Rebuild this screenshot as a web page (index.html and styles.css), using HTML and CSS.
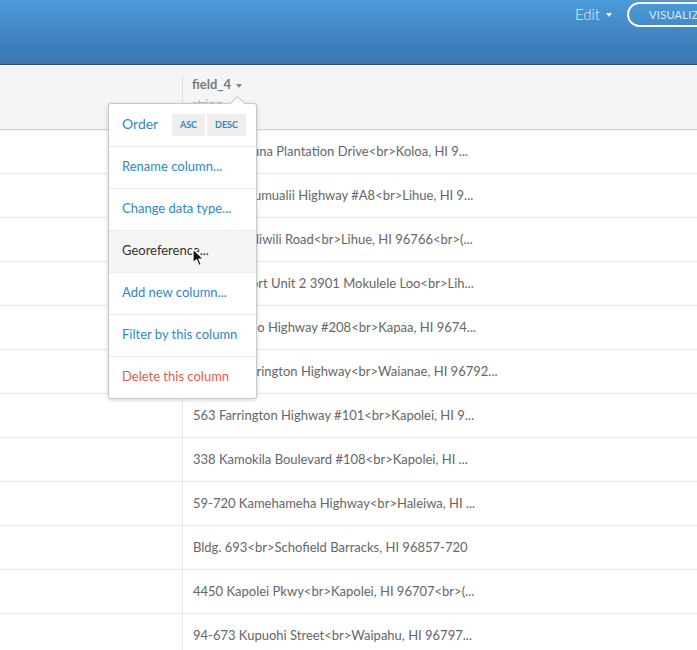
FILE: index.html
```html
<!DOCTYPE html>
<html>
<head>
<meta charset="utf-8">
<link rel="stylesheet" href="styles.css">
</head>
<body>
<div class="page">
  <header class="topbar">
    <nav class="topnav">
      <span class="edit">Edit <span class="caret caret-white"></span></span>
      <span class="viz-btn">VISUALIZE</span>
    </nav>
  </header>
  <div class="thead">
    <div class="col-first"></div>
    <div class="col-head">
      <div class="col-name">field_4 <span class="caret caret-gray"></span></div>
      <div class="col-type">string</div>
    </div>
  </div>
  <div class="tbody">
    <div class="row"><div class="cell-first"></div><div class="cell">2360 Kiahuna Plantation Drive&lt;br&gt;Koloa, HI 9...</div></div>
    <div class="row"><div class="cell-first"></div><div class="cell">3-3295 Kaumualii Highway #A8&lt;br&gt;Lihue, HI 9...</div></div>
    <div class="row"><div class="cell-first"></div><div class="cell">3351 Nawiliwili Road&lt;br&gt;Lihue, HI 96766&lt;br&gt;(...</div></div>
    <div class="row"><div class="cell-first"></div><div class="cell">Lihue Airport Unit 2 3901 Mokulele Loo&lt;br&gt;Lih...</div></div>
    <div class="row"><div class="cell-first"></div><div class="cell">4-831 Kuhio Highway #208&lt;br&gt;Kapaa, HI 9674...</div></div>
    <div class="row"><div class="cell-first"></div><div class="cell">86-120 Farrington Highway&lt;br&gt;Waianae, HI 96792...</div></div>
    <div class="row"><div class="cell-first"></div><div class="cell">563 Farrington Highway #101&lt;br&gt;Kapolei, HI 9...</div></div>
    <div class="row"><div class="cell-first"></div><div class="cell">338 Kamokila Boulevard #108&lt;br&gt;Kapolei, HI ...</div></div>
    <div class="row"><div class="cell-first"></div><div class="cell">59-720 Kamehameha Highway&lt;br&gt;Haleiwa, HI ...</div></div>
    <div class="row"><div class="cell-first"></div><div class="cell">Bldg. 693&lt;br&gt;Schofield Barracks, HI 96857-720</div></div>
    <div class="row"><div class="cell-first"></div><div class="cell">4450 Kapolei Pkwy&lt;br&gt;Kapolei, HI 96707&lt;br&gt;(...</div></div>
    <div class="row"><div class="cell-first"></div><div class="cell">94-673 Kupuohi Street&lt;br&gt;Waipahu, HI 96797...</div></div>
  </div>

  <div class="menu">
    <div class="menu-arrow"></div>
    <ul class="menu-list">
      <li class="menu-item order">
        <span class="link">Order</span>
        <span class="sort-group"><span class="sort-btn">ASC</span><span class="sort-btn">DESC</span></span>
      </li>
      <li class="menu-item"><span class="link">Rename column...</span></li>
      <li class="menu-item"><span class="link">Change data type...</span></li>
      <li class="menu-item active"><span class="link">Georeference...</span></li>
      <li class="menu-item"><span class="link">Add new column...</span></li>
      <li class="menu-item"><span class="link">Filter by this column</span></li>
      <li class="menu-item"><span class="link danger">Delete this column</span></li>
    </ul>
  </div>

  <svg class="cursor" width="14" height="20" viewBox="0 0 14 20">
    <path d="M1 1 L1 15 L4.5 11.8 L7 17.5 L9.3 16.5 L6.8 11 L11.5 11 Z" fill="#111" stroke="#fff" stroke-width="1.2" stroke-linejoin="round"/>
  </svg>
</div>
</body>
</html>
```

FILE: styles.css
```css
* { box-sizing: border-box; }
html, body { margin: 0; padding: 0; }
body {
  font-family: Lato, "Open Sans", "Liberation Sans", sans-serif;
  background: #fff;
  overflow: hidden;
}
.page {
  position: relative;
  width: 697px;
  height: 650px;
  overflow: hidden;
}
.topbar {
  height: 65px;
  background: linear-gradient(to bottom, #4b9bd9 0%, #3f83c0 60%, #3b78b1 100%);
  border-bottom: 1px solid #2e4d6b;
  display: flex;
  justify-content: flex-end;
}
.topnav {
  display: flex;
  align-items: flex-start;
  gap: 15px;
  margin-right: -60px;
  padding-top: 2px;
}
.edit {
  color: #e8f1fa;
  font-size: 15px;
  font-weight: 300;
  line-height: 25px;
  display: flex;
  align-items: center;
  gap: 6px;
}
.caret {
  display: inline-block;
  width: 0;
  height: 0;
  border-left: 3.5px solid transparent;
  border-right: 3.5px solid transparent;
  border-top: 4px solid #fff;
}
.caret-gray { border-top-color: #888; vertical-align: middle; margin-left: 2px; }
.viz-btn {
  display: inline-block;
  height: 25px;
  line-height: 21px;
  padding: 0 20px;
  border: 2px solid #fff;
  border-radius: 13px;
  color: #dce9f6;
  font-size: 11px;
  letter-spacing: 0.3px;
  width: 130px;
}
.thead {
  display: flex;
  height: 65px;
  background: #f5f5f5;
  border-bottom: 1px solid #d4d4d4;
  box-shadow: 0 1px 1px rgba(0,0,0,0.05);
}
.col-first { width: 182px; }
.col-head {
  margin-top: 10px;
  border-left: 1px solid #e0e0e0;
  padding-left: 9px;
  padding-top: 1px;
}
.col-name {
  font-size: 13px;
  font-weight: 700;
  color: #7a7a7a;
  line-height: 17px;
}
.col-type {
  font-size: 12px;
  color: #b0b0b0;
  line-height: 16px;
  margin-top: 3px;
}
.row {
  display: flex;
  height: 44px;
  border-bottom: 1px solid #e8e8e8;
}
.cell-first {
  width: 183px;
  border-right: 1px solid #e8e8e8;
}
.cell {
  padding-left: 10px;
  font-size: 13px;
  color: #666;
  line-height: 43px;
  white-space: nowrap;
}
.menu {
  position: absolute;
  left: 108px;
  top: 103px;
  width: 149px;
  background: #fff;
  border: 1px solid #c8c8c8;
  border-radius: 3px;
  box-shadow: 0 1px 4px rgba(0,0,0,0.18);
}
.menu-arrow {
  position: absolute;
  top: -6px;
  left: 123px;
  width: 11px;
  height: 11px;
  background: #fff;
  border-left: 1px solid #c8c8c8;
  border-top: 1px solid #c8c8c8;
  transform: rotate(45deg);
}
.menu-list {
  list-style: none;
  margin: 0;
  padding: 0;
  position: relative;
}
.menu-item {
  height: 42px;
  display: flex;
  align-items: center;
  padding-left: 13px;
  padding-bottom: 4px;
  border-bottom: 1px solid #ebebeb;
  font-size: 13px;
}
.menu-item:last-child { border-bottom: none; height: 41px; }
.menu-item.order { height: 43px; padding-right: 10px; padding-bottom: 0; justify-content: space-between; font-size: 14px; }
.menu-item.order .link { margin-top: -3px; }
.link { color: #2f88c5; }
.danger { color: #e65a52; }
.menu-item.active { background: #f5f5f5; }
.menu-item.active .link { color: #333; }
.sort-group { display: flex; gap: 2px; }
.sort-btn {
  background: #eeeeee;
  color: #2f88c5;
  font-size: 9px;
  font-weight: 700;
  height: 22px;
  line-height: 22px;
  padding: 0 8px;
}
.cursor {
  position: absolute;
  left: 192px;
  top: 248px;
}
```
